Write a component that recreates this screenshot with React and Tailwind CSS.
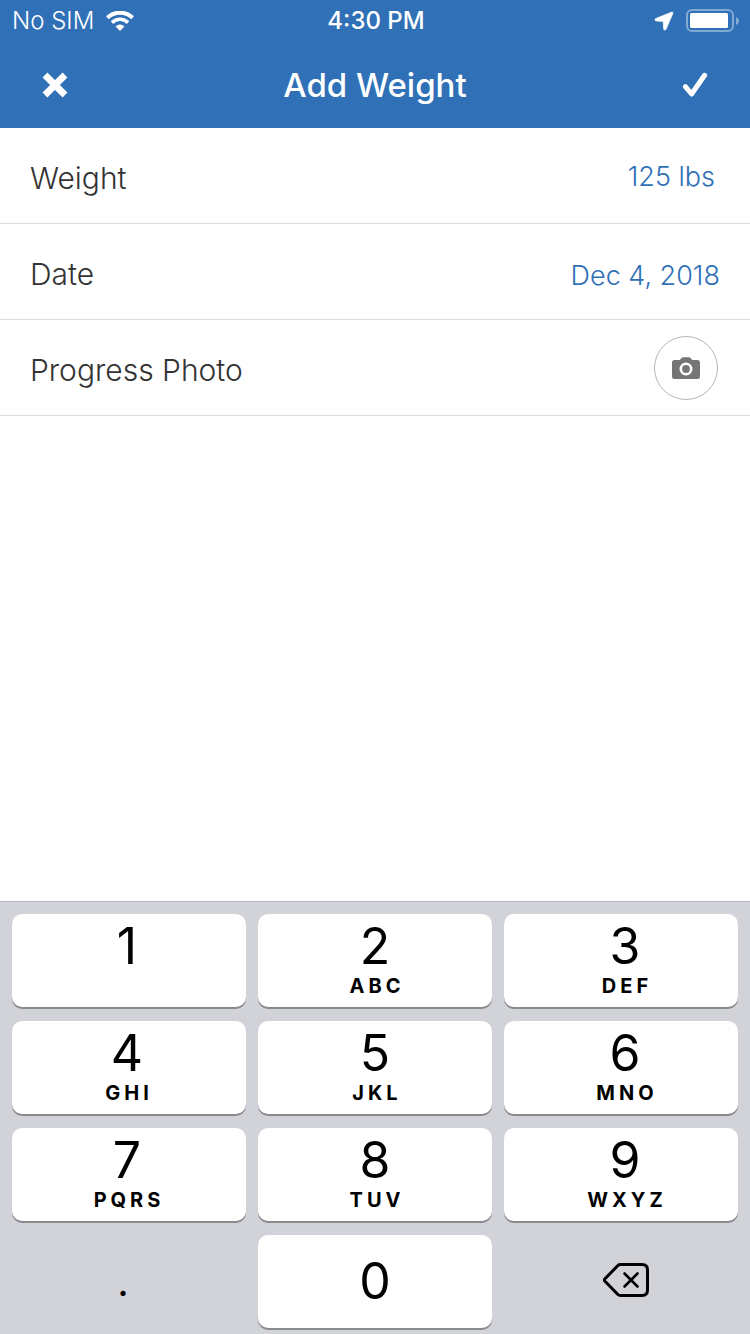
import { useState } from 'react';

const KEYS = [
    { digit: '1', letters: '' },
    { digit: '2', letters: 'ABC' },
    { digit: '3', letters: 'DEF' },
    { digit: '4', letters: 'GHI' },
    { digit: '5', letters: 'JKL' },
    { digit: '6', letters: 'MNO' },
    { digit: '7', letters: 'PQRS' },
    { digit: '8', letters: 'TUV' },
    { digit: '9', letters: 'WXYZ' },
];

// outer columns lean towards the edges of the screen
const COLUMN_PADDING = ['pr-1', '', 'pl-2'];

const WifiIcon = () => (
    <svg width="28" height="20" viewBox="0 0 28 20" fill="none" stroke="#fff" aria-hidden="true">
        <path d="M1.4 6.8a18 18 0 0 1 25.2 0" strokeWidth="4" />
        <path d="M6 11.6a11.4 11.4 0 0 1 16 0" strokeWidth="3.6" />
        <path d="M14 20l-4.4-4.5a6 6 0 0 1 8.8 0z" fill="#fff" stroke="none" />
    </svg>
);

const LocationIcon = () => (
    <svg width="20" height="20" viewBox="0 0 20 20" aria-hidden="true">
        <path d="M17.6 1.1 1.6 7.6c-1 .5-.8 2.2.3 2.3l6.600.6c.4 0 .7.3.7.7l.4 6.800c.1 1.300 1.900 1.500 2.500.3L18.900 2.400c.3-.9-.4-1.600-1.300-1.300z" fill="#fff" stroke="#fff" strokeWidth=".6" />
    </svg>
);

const BatteryIcon = () => (
    <svg width="54" height="24" viewBox="0 0 54 24" aria-hidden="true">
        <rect x="1" y="1" width="46" height="21" rx="5" fill="none" stroke="#82a9d4" strokeWidth="2" />
        <rect x="4" y="4" width="38" height="15" rx="1.5" fill="#fff" />
        <path d="M50 8c4 1.2 4 6.8 0 8z" fill="#82a9d4" />
    </svg>
);

const CloseIcon = () => (
    <svg width="26" height="26" viewBox="0 0 26 26" aria-hidden="true">
        <path d="M3 3l20 20M23 3L3 23" stroke="#fff" strokeWidth="6.8" strokeLinecap="butt" />
    </svg>
);

const CheckIcon = () => (
    <svg width="26" height="26" viewBox="0 0 26 26" aria-hidden="true">
        <path d="M3.4 14.6l6.2 7.4L22.6 3.3" fill="none" stroke="#fff" strokeWidth="5" strokeLinecap="round" strokeLinejoin="round" />
    </svg>
);

const CameraIcon = () => (
    <svg width="28" height="22" viewBox="0 0 28 22" aria-hidden="true">
        <path d="M2.5 3h5.2L9.6.9Q10.2.3 11 .3h6q.8 0 1.4.6L20.3 3h5.2Q28 3 28 5.5v14q0 2.5-2.5 2.5h-23Q0 22 0 19.5v-14Q0 3 2.5 3z" fill="#757575" />
        <circle cx="14" cy="12" r="5.2" fill="#757575" stroke="#fff" strokeWidth="2.6" />
    </svg>
);

const BackspaceIcon = () => (
    <svg width="46" height="34" viewBox="0 0 46 34" fill="none" stroke="#000" strokeLinecap="round" strokeLinejoin="round" aria-hidden="true">
        <path d="M17.500 1.500H39q5.500 0 5.500 5.500v20q0 5.500-5.500 5.500H17.500q-1.500 0-2.600-1L2 18.200q-1.100-1.200 0-2.400L14.900 2.500q1.100-1 2.600-1z" strokeWidth="3" />
        <path d="M21.500 10.500l13 13M34.500 10.500l-13 13" strokeWidth="2.6" />
    </svg>
);

const Header = () => (
    <header className="bg-[#2f70b7] text-white">
        <div className="grid grid-cols-3 items-center h-10 pt-[2px] pl-3 pr-[10px] text-2xl leading-8">
            <div className="flex items-center gap-3">
                <span className="font-light">No SIM</span>
                <WifiIcon />
            </div>
            <span className="text-center font-medium">4:30 PM</span>
            <div className="flex items-center justify-end gap-3">
                <LocationIcon />
                <BatteryIcon />
            </div>
        </div>
        <div className="flex items-center justify-between h-[88px] pt-[2px] px-10">
            <button type="button" aria-label="Close" className="p-[2px]"><CloseIcon /></button>
            <h1 className="text-[33px] leading-10 font-medium">Add Weight</h1>
            <button type="button" aria-label="Save" className="p-[2px]"><CheckIcon /></button>
        </div>
    </header>
);

const App = () => {
    const [weight, setWeight] = useState('125');
    const [date, setDate] = useState('Dec 4, 2018');

    const press = (char) => setWeight((value) => value + char);
    const handleWeight = (e) => setWeight(e.target.value.replace(/[^0-9.]/g, ''));

    return (
        <div className="min-h-screen flex flex-col bg-white font-['Inter',sans-serif]">
            <Header />
            <main className="flex-1 text-[#333]">
                <div className="flex items-center justify-between h-24 pl-[30px] pr-[35px] border-b border-[#dcdcdc]">
                    <label htmlFor="weight" className="text-[30px] leading-10 pt-1 font-light">Weight</label>
                    <input id="weight" value={`${weight} lbs`} onChange={handleWeight} className="flex-1 min-w-0 pt-[2px] text-right text-[27px] leading-10 font-light text-[#2f70b7] outline-none" />
                </div>
                <div className="flex items-center justify-between h-24 pl-[30px] pr-[30px] border-b border-[#dcdcdc]">
                    <label htmlFor="date" className="text-[30px] leading-10 pt-1 font-light">Date</label>
                    <input id="date" value={date} onChange={(e) => setDate(e.target.value)} className="flex-1 min-w-0 pt-2 text-right text-[27px] leading-10 font-light text-[#2f70b7] outline-none" />
                </div>
                <div className="flex items-center justify-between h-24 pl-[30px] pr-8 border-b border-[#dcdcdc]">
                    <span id="photo" className="text-[30px] leading-10 pt-1 font-light">Progress Photo</span>
                    <button type="button" aria-labelledby="photo" className="flex items-center justify-center size-16 rounded-full border border-[#b5b5b5]">
                        <CameraIcon />
                    </button>
                </div>
            </main>
            <div className="grid grid-cols-3 gap-x-3 gap-y-[14px] px-3 pt-3 pb-[6px] bg-[#d2d3d9] border-t border-[#b5b8c0] text-black">
                {KEYS.map(({ digit, letters }, i) => (
                    <button
                        key={digit}
                        type="button"
                        onClick={() => press(digit)}
                        className={`flex flex-col items-center h-[93px] pt-[7px] rounded-[10px] bg-white shadow-[0_2px_0_#898a8d] ${COLUMN_PADDING[i % 3]}`}
                    >
                        <span className="text-[50px] leading-[50px]">{digit}</span>
                        {letters && <span className="pl-1 text-xl leading-[30px] font-bold tracking-[4px]">{letters}</span>}
                    </button>
                ))}
                <button type="button" onClick={() => press('.')} className="h-[93px] pr-3 text-[40px] leading-[50px]">.</button>
                <button type="button" onClick={() => press('0')} className="h-[93px] pb-[2px] rounded-[10px] bg-white shadow-[0_2px_0_#898a8d] text-[50px] leading-[50px]">0</button>
                <button type="button" aria-label="Delete" onClick={() => setWeight(weight.slice(0, -1))} className="flex items-center justify-center h-[93px] pb-1 pl-[10px]">
                    <BackspaceIcon />
                </button>
            </div>
        </div>
    );
};

export default App;
